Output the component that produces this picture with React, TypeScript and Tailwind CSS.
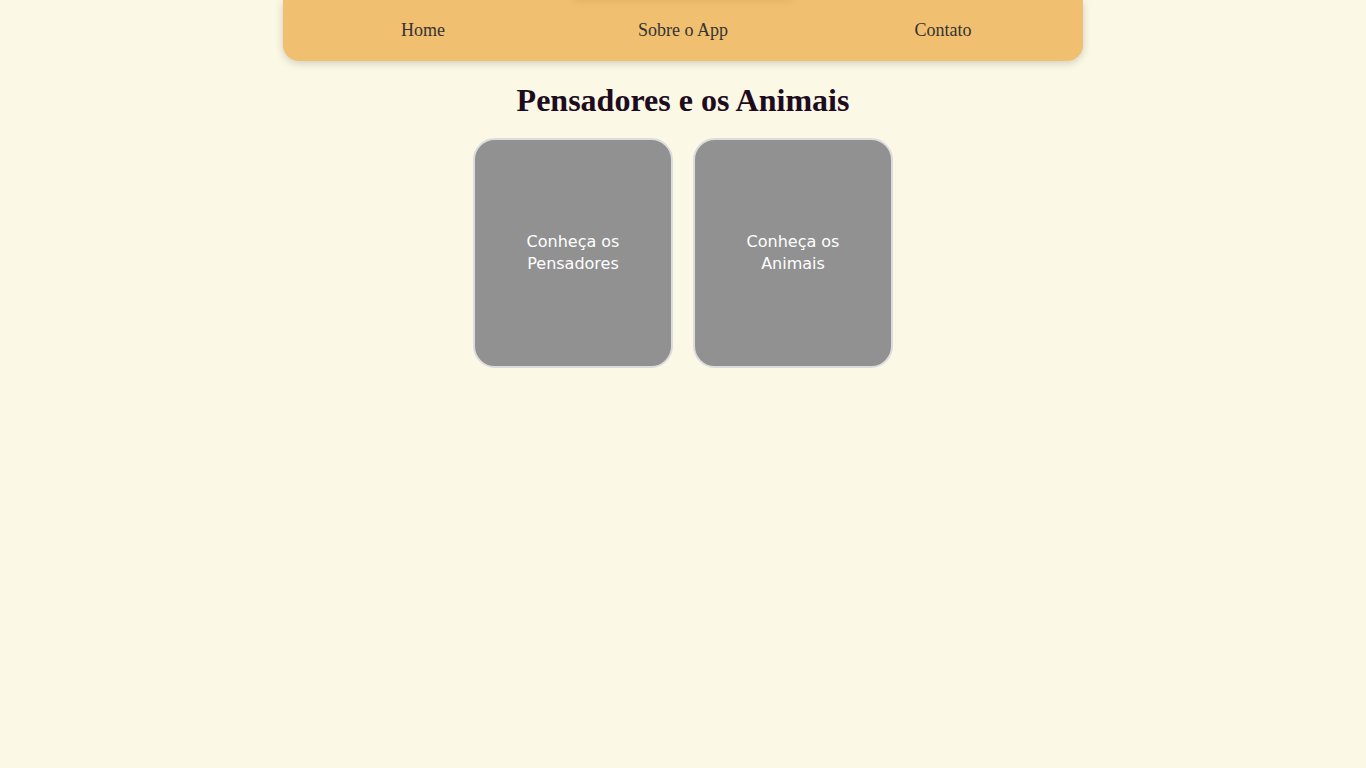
export default function App() {
  const cards = ["Pensadores", "Animais"];

  return (
    <div className="min-h-screen bg-[#fcf8e6] font-['Liberation_Serif',serif]">
      <nav className="relative mx-auto w-[800px] h-[61px] bg-[#f0c070] rounded-b-2xl shadow-[0_2px_8px_rgba(0,0,0,0.18)] grid grid-cols-3 items-center px-[10px] text-[18px] text-[#333]">
        <div className="absolute left-[292px] top-[-2px] w-[216px] h-[2px] shadow-[0_0_6px_2px_rgba(180,130,60,0.2)]" />
        <a className="text-center">Home</a>
        <a className="text-center">Sobre o App</a>
        <a className="text-center">Contato</a>
      </nav>

      <h1 className="mt-[19px] text-center text-[32px] leading-[40px] font-bold text-[#1c0c1e]">
        Pensadores e os Animais
      </h1>

      <div className="mt-[18px] flex justify-center gap-[20px]">
        {cards.map((c) => (
          <div
            key={c}
            className="w-[200px] h-[230px] rounded-[22px] border-2 border-[#dcdcdc] bg-[#919191] flex items-center justify-center text-center text-white text-[16px] leading-[22px] font-['DejaVu_Sans',sans-serif] px-10"
          >
            Conheça os {c}
          </div>
        ))}
      </div>
    </div>
  );
}
